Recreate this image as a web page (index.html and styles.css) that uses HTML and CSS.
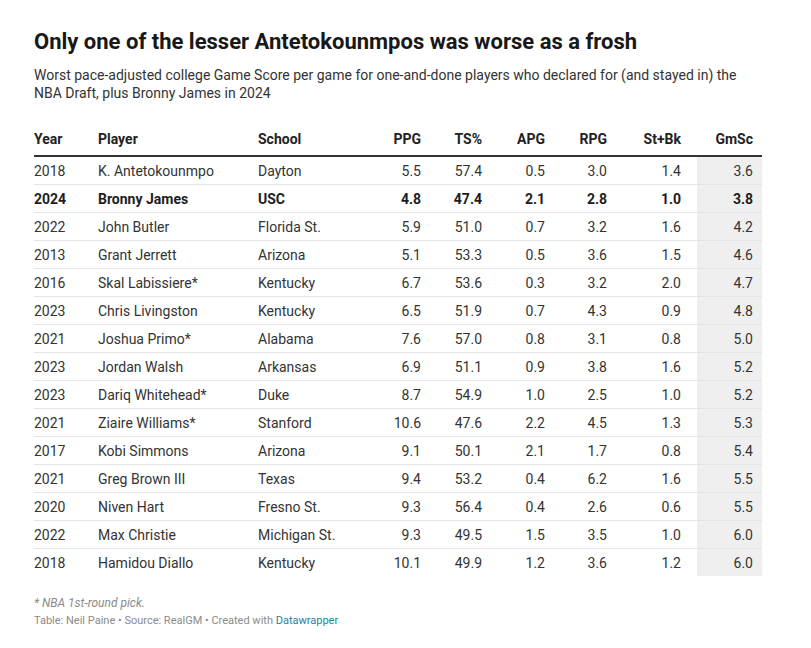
FILE: index.html
```html
<!DOCTYPE html>
<html lang="en">
<head>
<meta charset="utf-8">
<title>Only one of the lesser Antetokounmpos was worse as a frosh</title>
<link rel="stylesheet" href="styles.css">
</head>
<body>
<div class="chart">
  <h1 class="title">Only one of the lesser Antetokounmpos was worse as a frosh</h1>
  <p class="subtitle">Worst pace-adjusted college Game Score per game for one-and-done players who declared for (and stayed in) the NBA Draft, plus Bronny James in 2024</p>
  <table class="stats">
    <colgroup>
      <col class="c-year"><col class="c-player"><col class="c-school"><col class="c-ppg"><col class="c-ts"><col class="c-apg"><col class="c-rpg"><col class="c-stbk"><col class="c-gmsc">
    </colgroup>
    <thead>
      <tr>
        <th class="l first">Year</th><th class="l">Player</th><th class="l">School</th><th class="n">PPG</th><th class="n">TS%</th><th class="n">APG</th><th class="n">RPG</th><th class="n stbk">St+Bk</th><th class="n gm">GmSc</th>
      </tr>
    </thead>
    <tbody>
      <tr><td class="l first">2018</td><td class="l">K. Antetokounmpo</td><td class="l">Dayton</td><td class="n">5.5</td><td class="n">57.4</td><td class="n">0.5</td><td class="n">3.0</td><td class="n stbk">1.4</td><td class="n gm shade">3.6</td></tr>
      <tr class="hl"><td class="l first">2024</td><td class="l">Bronny James</td><td class="l">USC</td><td class="n">4.8</td><td class="n">47.4</td><td class="n">2.1</td><td class="n">2.8</td><td class="n stbk">1.0</td><td class="n gm shade">3.8</td></tr>
      <tr><td class="l first">2022</td><td class="l">John Butler</td><td class="l">Florida St.</td><td class="n">5.9</td><td class="n">51.0</td><td class="n">0.7</td><td class="n">3.2</td><td class="n stbk">1.6</td><td class="n gm shade">4.2</td></tr>
      <tr><td class="l first">2013</td><td class="l">Grant Jerrett</td><td class="l">Arizona</td><td class="n">5.1</td><td class="n">53.3</td><td class="n">0.5</td><td class="n">3.6</td><td class="n stbk">1.5</td><td class="n gm shade">4.6</td></tr>
      <tr><td class="l first">2016</td><td class="l">Skal Labissiere*</td><td class="l">Kentucky</td><td class="n">6.7</td><td class="n">53.6</td><td class="n">0.3</td><td class="n">3.2</td><td class="n stbk">2.0</td><td class="n gm shade">4.7</td></tr>
      <tr><td class="l first">2023</td><td class="l">Chris Livingston</td><td class="l">Kentucky</td><td class="n">6.5</td><td class="n">51.9</td><td class="n">0.7</td><td class="n">4.3</td><td class="n stbk">0.9</td><td class="n gm shade">4.8</td></tr>
      <tr><td class="l first">2021</td><td class="l">Joshua Primo*</td><td class="l">Alabama</td><td class="n">7.6</td><td class="n">57.0</td><td class="n">0.8</td><td class="n">3.1</td><td class="n stbk">0.8</td><td class="n gm shade">5.0</td></tr>
      <tr><td class="l first">2023</td><td class="l">Jordan Walsh</td><td class="l">Arkansas</td><td class="n">6.9</td><td class="n">51.1</td><td class="n">0.9</td><td class="n">3.8</td><td class="n stbk">1.6</td><td class="n gm shade">5.2</td></tr>
      <tr><td class="l first">2023</td><td class="l">Dariq Whitehead*</td><td class="l">Duke</td><td class="n">8.7</td><td class="n">54.9</td><td class="n">1.0</td><td class="n">2.5</td><td class="n stbk">1.0</td><td class="n gm shade">5.2</td></tr>
      <tr><td class="l first">2021</td><td class="l">Ziaire Williams*</td><td class="l">Stanford</td><td class="n">10.6</td><td class="n">47.6</td><td class="n">2.2</td><td class="n">4.5</td><td class="n stbk">1.3</td><td class="n gm shade">5.3</td></tr>
      <tr><td class="l first">2017</td><td class="l">Kobi Simmons</td><td class="l">Arizona</td><td class="n">9.1</td><td class="n">50.1</td><td class="n">2.1</td><td class="n">1.7</td><td class="n stbk">0.8</td><td class="n gm shade">5.4</td></tr>
      <tr><td class="l first">2021</td><td class="l">Greg Brown III</td><td class="l">Texas</td><td class="n">9.4</td><td class="n">53.2</td><td class="n">0.4</td><td class="n">6.2</td><td class="n stbk">1.6</td><td class="n gm shade">5.5</td></tr>
      <tr><td class="l first">2020</td><td class="l">Niven Hart</td><td class="l">Fresno St.</td><td class="n">9.3</td><td class="n">56.4</td><td class="n">0.4</td><td class="n">2.6</td><td class="n stbk">0.6</td><td class="n gm shade">5.5</td></tr>
      <tr><td class="l first">2022</td><td class="l">Max Christie</td><td class="l">Michigan St.</td><td class="n">9.3</td><td class="n">49.5</td><td class="n">1.5</td><td class="n">3.5</td><td class="n stbk">1.0</td><td class="n gm shade">6.0</td></tr>
      <tr class="last"><td class="l first">2018</td><td class="l">Hamidou Diallo</td><td class="l">Kentucky</td><td class="n">10.1</td><td class="n">49.9</td><td class="n">1.2</td><td class="n">3.6</td><td class="n stbk">1.2</td><td class="n gm shade">6.0</td></tr>
    </tbody>
  </table>
  <p class="notes">* NBA 1st-round pick.</p>
  <p class="byline">Table: Neil Paine • Source: RealGM • Created with <a class="dw" href="#">Datawrapper</a></p>
</div>
</body>
</html>
```
FILE: styles.css
```css
html, body {
  margin: 0;
  padding: 0;
  background: #ffffff;
}

body {
  font-family: Roboto, "Liberation Sans", Arial, sans-serif;
  color: #333333;
}

.chart {
  width: 728px;
  padding: 29px 0 0 34px;
}

.title {
  margin: 0;
  font-size: 22px;
  line-height: 26px;
  font-weight: 700;
  color: #181818;
}

.subtitle {
  margin: 11px 0 0;
  font-size: 14px;
  line-height: 18px;
  color: #333333;
}

.stats {
  width: 728px;
  margin-top: 23px;
  border-collapse: collapse;
  table-layout: fixed;
  font-size: 14px;
  line-height: 18px;
}

.c-year { width: 64px; }
.c-player { width: 160px; }
.c-school { width: 100px; }
.c-ppg { width: 63px; }
.c-ts { width: 61px; }
.c-apg { width: 63px; }
.c-rpg { width: 62px; }
.c-stbk { width: 90px; }
.c-gmsc { width: 65px; }

.stats th {
  font-weight: 700;
  color: #222222;
  padding: 5px 0 7px;
  border-bottom: 2px solid #333333;
}

.stats td {
  padding: 5px 0 4px;
  border-bottom: 1px solid #e5e5e5;
  color: #333333;
}

.stats tr.last td {
  border-bottom: none;
}

.stats .l {
  text-align: left;
}

.stats .n {
  text-align: right;
}

.stats .stbk {
  padding-right: 16px;
}

.stats .gm {
  padding-right: 9px;
}

.stats td.shade {
  background: #efefef;
}

.stats tr.hl td {
  font-weight: 700;
  color: #1d1d1d;
}

.notes {
  margin: 19px 0 0;
  font-size: 12px;
  line-height: 16px;
  font-style: italic;
  color: #8a8a8a;
}

.byline {
  margin: 3px 0 0;
  font-size: 11px;
  line-height: 14px;
  color: #8a8a8a;
}

.dw {
  color: #1d81a2;
  text-decoration: none;
}
```
